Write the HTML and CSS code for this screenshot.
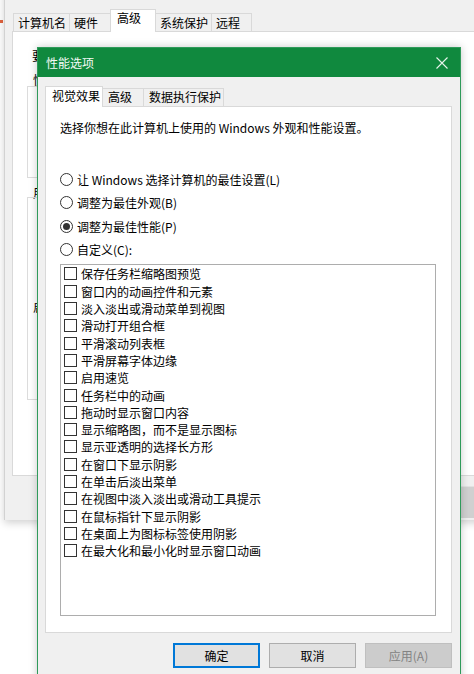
FILE: index.html
```html
<!DOCTYPE html>
<html lang="zh-CN">
<head>
<meta charset="utf-8">
<title>性能选项</title>
<link rel="stylesheet" href="styles.css">
</head>
<body>
<div class="desk">
  <div class="redmark"></div>

  <div class="bgwin">
    <div class="bgtabs">
      <div class="bgtab w56">计算机名</div>
      <div class="bgtab w41">硬件</div>
      <div class="bgtab sel w45">高级</div>
      <div class="bgtab w56">系统保护</div>
      <div class="bgtab w40">远程</div>
    </div>
    <div class="bgpanel">
      <p class="bgnote">要</p>
      <p class="bglabel">性</p>
      <div class="group g1"></div>
      <p class="bglabel l2">用</p>
      <div class="group g2"><span class="glabel">启</span></div>
    </div>
    <div class="bgbar"><div class="bgbtn"></div></div>
  </div>

  <div class="dialog">
    <div class="titlebar">
      <span class="title">性能选项</span>
      <svg class="close" width="12" height="12" viewBox="0 0 12 12">
        <path d="M0.5 0.5 L11.5 11.5 M11.5 0.5 L0.5 11.5" stroke="#e8f4ec" stroke-width="1.1" fill="none"/>
      </svg>
    </div>
    <div class="dbody">
      <div class="tabs">
        <div class="tab sel t1">视觉效果</div>
        <div class="tab t2">高级</div>
        <div class="tab t3">数据执行保护</div>
      </div>
      <div class="panel">
        <p class="desc">选择你想在此计算机上使用的 Windows 外观和性能设置。</p>
        <div class="radios">
          <div class="radio"><span class="rb"></span>让 Windows 选择计算机的最佳设置(L)</div>
          <div class="radio"><span class="rb"></span>调整为最佳外观(B)</div>
          <div class="radio"><span class="rb on"></span>调整为最佳性能(P)</div>
          <div class="radio"><span class="rb"></span>自定义(C):</div>
        </div>
        <div class="listbox">
          <div class="item"><span class="cb"></span>保存任务栏缩略图预览</div>
          <div class="item"><span class="cb"></span>窗口内的动画控件和元素</div>
          <div class="item"><span class="cb"></span>淡入淡出或滑动菜单到视图</div>
          <div class="item"><span class="cb"></span>滑动打开组合框</div>
          <div class="item"><span class="cb"></span>平滑滚动列表框</div>
          <div class="item"><span class="cb"></span>平滑屏幕字体边缘</div>
          <div class="item"><span class="cb"></span>启用速览</div>
          <div class="item"><span class="cb"></span>任务栏中的动画</div>
          <div class="item"><span class="cb"></span>拖动时显示窗口内容</div>
          <div class="item"><span class="cb"></span>显示缩略图，而不是显示图标</div>
          <div class="item"><span class="cb"></span>显示亚透明的选择长方形</div>
          <div class="item"><span class="cb"></span>在窗口下显示阴影</div>
          <div class="item"><span class="cb"></span>在单击后淡出菜单</div>
          <div class="item"><span class="cb"></span>在视图中淡入淡出或滑动工具提示</div>
          <div class="item"><span class="cb"></span>在鼠标指针下显示阴影</div>
          <div class="item"><span class="cb"></span>在桌面上为图标标签使用阴影</div>
          <div class="item"><span class="cb"></span>在最大化和最小化时显示窗口动画</div>
        </div>
      </div>
      <div class="buttons">
        <button class="btn default">确定</button>
        <button class="btn">取消</button>
        <button class="btn disabled">应用(A)</button>
      </div>
    </div>
  </div>
</div>
</body>
</html>
```

FILE: styles.css
```css
* { box-sizing: border-box; }

html, body {
  margin: 0;
  padding: 0;
}

body {
  width: 474px;
  height: 674px;
  overflow: hidden;
  background: #ffffff;
  font-family: "Noto Sans CJK SC", "Noto Sans", sans-serif;
  font-size: 12px;
  color: #000;
}

.desk {
  position: relative;
  width: 474px;
  height: 674px;
  overflow: hidden;
}

.redmark {
  position: absolute;
  left: 0;
  top: 20px;
  width: 3px;
  height: 3px;
  background: #e2643f;
}

/* ---------- background window (System Properties) ---------- */
.bgwin {
  position: absolute;
  left: 4px;
  top: -20px;
  width: 520px;
  height: 540px;
  background: #f0f0f0;
  border-left: 1px solid #d2d2d2;
  box-shadow: 0 3px 8px rgba(0, 0, 0, 0.18);
  display: flex;
  flex-direction: column;
}

.bgtabs {
  display: flex;
  align-items: flex-end;
  height: 23px;
  margin-top: 29px;
  margin-left: 8px;
  position: relative;
  z-index: 1;
}

.bgtab {
  height: 18px;
  margin-bottom: 1px;
  border: 1px solid #d9d9d9;
  border-bottom: none;
  margin-right: -1px;
  background: #f0f0f0;
  line-height: 17px;
  padding-left: 4px;
  white-space: nowrap;
}

.bgtab.sel {
  height: 23px;
  margin-bottom: 0;
  background: #fff;
  line-height: 15px;
  padding-left: 6px;
  position: relative;
  z-index: 2;
}

.w56 { width: 57px; }
.w41 { width: 42px; }
.w45 { width: 46px; }
.w40 { width: 41px; }

.bgpanel {
  margin-top: -1px;
  margin-left: 7px;
  height: 445px;
  background: #fff;
  border: 1px solid #d9d9d9;
  border-right: none;
  padding-left: 14px;
  display: flex;
  flex-direction: column;
  align-items: flex-start;
}

.bgnote {
  margin: 15px 0 0 5px;
  width: 5px;
  overflow: hidden;
  line-height: 17px;
  white-space: nowrap;
}

.bglabel {
  margin: 9px 0 0 6px;
  width: 4px;
  overflow: hidden;
  line-height: 14px;
  white-space: nowrap;
}

.bglabel.l2 {
  margin-top: 8px;
}

.group {
  width: 400px;
  border: 1px solid #dcdcdc;
}

.g1 {
  margin-top: -1px;
  height: 92px;
}

.g2 {
  margin-top: -3px;
  height: 203px;
  padding: 102px 0 0 5px;
  line-height: 14px;
}

.glabel {
  display: block;
  width: 4px;
  overflow: hidden;
  white-space: nowrap;
}

.bgbar {
  height: 44px;
  display: flex;
  padding: 10px 0 0 420px;
}

.bgbtn {
  width: 80px;
  height: 32px;
  background: #d0d0d0;
  border-top: 1px solid #e2e2e2;
}

/* ---------- dialog ---------- */
.dialog {
  position: absolute;
  left: 37px;
  top: 47px;
  width: 424px;
  height: 660px;
  background: #f0f0f0;
  border: 1px solid #2f9a5a;
  box-shadow: 0 0 8px rgba(0, 0, 0, 0.22);
  display: flex;
  flex-direction: column;
}

.titlebar {
  height: 29px;
  flex: none;
  background: #10893e;
  display: flex;
  align-items: center;
  justify-content: space-between;
  padding: 0 12px 0 8px;
}

.title {
  color: #f4faf6;
  font-size: 12px;
  line-height: 16px;
}

.close {
  display: block;
}

.dbody {
  padding: 9px 8px 0 7px;
  display: flex;
  flex-direction: column;
}

.tabs {
  display: flex;
  align-items: flex-end;
  height: 21px;
  margin-bottom: -1px;
  position: relative;
  z-index: 1;
}

.tab {
  height: 18px;
  margin-bottom: 1px;
  border: 1px solid #d9d9d9;
  border-bottom: none;
  background: #f0f0f0;
  line-height: 16px;
  padding-left: 5px;
  white-space: nowrap;
  margin-left: -1px;
}

.tab.sel {
  height: 21px;
  margin-bottom: 0;
  margin-left: 0;
  background: #fff;
  line-height: 18px;
  padding-left: 6px;
  position: relative;
  z-index: 2;
}

.t1 { width: 58px; }
.t2 { width: 42px; }
.t3 { width: 81px; }

.panel {
  height: 527px;
  background: #fff;
  border: 1px solid #d9d9d9;
  padding: 12px 0 0 14px;
}

.desc {
  margin: 0;
  line-height: 17px;
  white-space: nowrap;
}

.radios {
  margin-top: 32px;
}

.radio {
  height: 23.33px;
  display: flex;
  align-items: center;
  white-space: nowrap;
}

.rb {
  width: 13px;
  height: 13px;
  border: 1px solid #333;
  border-radius: 50%;
  background: #fff;
  margin-right: 4px;
  display: flex;
  align-items: center;
  justify-content: center;
  flex: none;
}

.rb.on::after {
  content: "";
  width: 7px;
  height: 7px;
  border-radius: 50%;
  background: #333;
}

.listbox {
  margin-top: 3px;
  width: 376px;
  height: 352px;
  border: 1px solid #adadad;
  padding: 0 0 0 3px;
}

.item {
  height: 17.3px;
  display: flex;
  align-items: center;
  white-space: nowrap;
}

.cb {
  width: 13px;
  height: 13px;
  border: 1px solid #333;
  background: #fff;
  margin-right: 4px;
  flex: none;
}

.buttons {
  margin-top: 10px;
  display: flex;
  justify-content: flex-end;
  gap: 9px;
}

.btn {
  width: 87px;
  height: 25px;
  background: #e1e1e1;
  border: 1px solid #adadad;
  font-family: "Noto Sans CJK SC", "Noto Sans", sans-serif;
  font-size: 12px;
  color: #000;
  padding: 0;
  line-height: 22px;
}

.btn.default {
  border: 2px solid #0078d7;
}

.btn.disabled {
  background: #cccccc;
  border-color: #bfbfbf;
  color: #838383;
}
```
